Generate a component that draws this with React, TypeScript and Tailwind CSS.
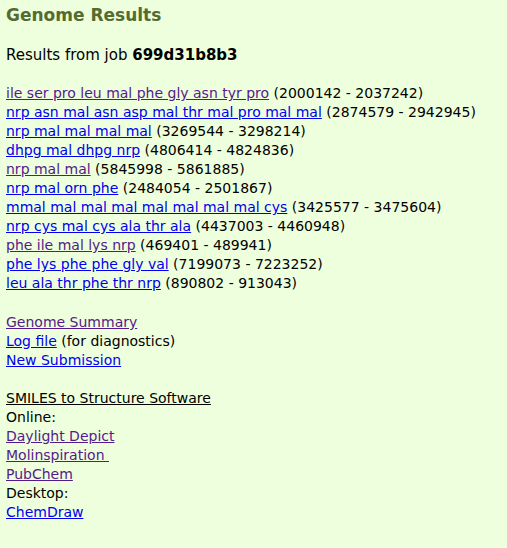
import React from 'react';

const clusters = [
  { name: 'ile ser pro leu mal phe gly asn tyr pro', range: '2000142 - 2037242', visited: true },
  { name: 'nrp asn mal asn asp mal thr mal pro mal mal', range: '2874579 - 2942945', visited: false },
  { name: 'nrp mal mal mal mal', range: '3269544 - 3298214', visited: false },
  { name: 'dhpg mal dhpg nrp', range: '4806414 - 4824836', visited: false },
  { name: 'nrp mal mal', range: '5845998 - 5861885', visited: true },
  { name: 'nrp mal orn phe', range: '2484054 - 2501867', visited: false },
  { name: 'mmal mal mal mal mal mal mal mal cys', range: '3425577 - 3475604', visited: false },
  { name: 'nrp cys mal cys ala thr ala', range: '4437003 - 4460948', visited: false },
  { name: 'phe ile mal lys nrp', range: '469401 - 489941', visited: true },
  { name: 'phe lys phe phe gly val', range: '7199073 - 7223252', visited: false },
  { name: 'leu ala thr phe thr nrp', range: '890802 - 913043', visited: false },
];

const Link = ({ children, visited }: { children: React.ReactNode; visited?: boolean }) => (
  <a href="#" className={visited ? 'underline text-[#551a8b] whitespace-pre' : 'underline text-[#0000ee] whitespace-pre'}>
    {children}
  </a>
);

const App = () => {
  return (
    <div className="min-h-[548px] bg-[#eeffdd] pl-[6px] pb-4 text-black text-[14px] leading-[19px] font-['DejaVu_Sans',sans-serif]">
      <h2 className="pt-[4px] text-[17px] leading-[22px] font-bold text-[#556b2f]">Genome Results</h2>

      <div className="mt-[20px] text-[15px]">
        Results from job <b>699d31b8b3</b>
      </div>

      <div className="mt-[19px]">
        {clusters.map(c => (
          <div key={c.range}>
            <Link visited={c.visited}>{c.name}</Link> ({c.range})
          </div>
        ))}
      </div>

      <div className="mt-[20px]">
        <div><Link visited>Genome Summary</Link></div>
        <div><Link>Log file</Link> (for diagnostics)</div>
        <div><Link>New Submission</Link></div>
      </div>

      <div className="mt-[19px]">
        <div><u>SMILES to Structure Software</u></div>
        <div>Online:</div>
        <div><Link visited>Daylight Depict</Link></div>
        <div><Link visited>Molinspiration </Link></div>
        <div><Link visited>PubChem</Link></div>
        <div>Desktop:</div>
        <div><Link>ChemDraw</Link></div>
      </div>
    </div>
  );
};

export default App;
